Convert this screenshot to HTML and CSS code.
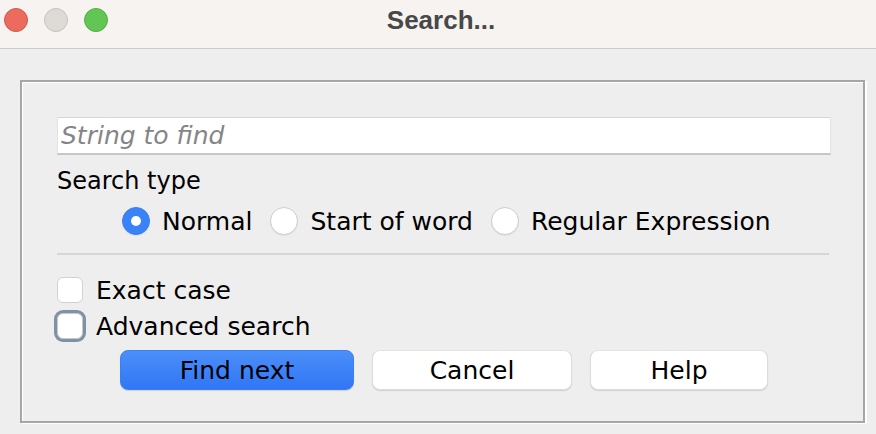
FILE: index.html
```html
<!DOCTYPE html>
<html>
<head>
<meta charset="utf-8">
<link rel="stylesheet" href="styles.css">
</head>
<body>
<div class="titlebar">
  <div class="lights">
    <span class="light red"></span>
    <span class="light gray"></span>
    <span class="light green"></span>
  </div>
  <div class="title">Search...</div>
</div>
<div class="content">
  <div class="panel">
    <input class="field" type="text" placeholder="String to find">
    <div class="label">Search type</div>
    <div class="radios">
      <div class="radio-item"><span class="radio on"></span><span>Normal</span></div>
      <div class="radio-item"><span class="radio"></span><span>Start of word</span></div>
      <div class="radio-item"><span class="radio"></span><span>Regular Expression</span></div>
    </div>
    <div class="sep"></div>
    <div class="check-row"><span class="check"></span><span>Exact case</span></div>
    <div class="check-row adv"><span class="check focus"></span><span>Advanced search</span></div>
    <div class="buttons">
      <button class="btn primary w1">Find next</button>
      <button class="btn w2">Cancel</button>
      <button class="btn w3">Help</button>
    </div>
  </div>
</div>
</body>
</html>
```

FILE: styles.css
```css
html, body {
  margin: 0;
  padding: 0;
}
body {
  width: 876px;
  height: 434px;
  background: #eeeeee;
  font-family: "DejaVu Sans", "Open Sans", sans-serif;
  color: #000;
  overflow: hidden;
}
.titlebar {
  height: 48px;
  background: #f7f3f0;
  border-bottom: 1px solid #cdcbc9;
  position: relative;
  display: flex;
  align-items: center;
  justify-content: center;
}
.lights {
  position: absolute;
  left: 4px;
  top: 8px;
  display: flex;
  gap: 16px;
}
.light {
  width: 22px;
  height: 22px;
  border-radius: 50%;
  display: block;
}
.red { background: #ec6a5e; border: 1px solid #d3574c; }
.gray { background: #dedad6; border: 1px solid #c6c2be; }
.green { background: #62c554; border: 1px solid #53ad45; }
.title {
  font-family: "Liberation Sans", Arial, sans-serif;
  font-weight: bold;
  font-size: 26px;
  color: #484848;
  margin-left: 6px;
  margin-top: -7px;
}
.content {
  padding: 31px 0 0 20px;
}
.panel {
  border: 2px solid #a6a6a6;
  box-shadow: inset 1px 1px 0 #ffffff, 2px 1px 0 #ffffff;
  padding: 35px 32px 0 35px;
  box-sizing: border-box;
  width: 845px;
  height: 343px;
}
.field {
  display: block;
  box-sizing: border-box;
  width: 774px;
  height: 38px;
  margin: 0;
  background: #fff;
  border: 1px solid #e2e2e2;
  border-top-color: #d6d6d6;
  border-bottom: 2px solid #c6c6c6;
  padding: 0 0 0 3px;
  font-family: "DejaVu Sans", sans-serif;
  font-size: 25px;
  font-style: italic;
  outline: none;
}
.field::placeholder {
  color: #858585;
  font-style: italic;
}
.label {
  font-size: 24px;
  line-height: 30px;
  margin-top: 11px;
}
.radios {
  display: flex;
  align-items: center;
  margin-top: 10px;
  margin-left: 65px;
  height: 30px;
  gap: 18px;
  font-size: 25px;
}
.radio-item {
  display: flex;
  align-items: center;
  gap: 12px;
  line-height: 30px;
}
.radio-item span:last-child {
  position: relative;
  top: 1px;
}
.radio {
  width: 26px;
  height: 26px;
  border-radius: 50%;
  background: #fff;
  border: 1px solid #cdcdcd;
  box-shadow: 0 1px 1px rgba(0,0,0,0.06);
  display: block;
  position: relative;
}
.radio.on {
  background: #3a82f7;
  border-color: #3a7ff0;
}
.radio.on::after {
  content: "";
  position: absolute;
  left: 8px;
  top: 8px;
  width: 10px;
  height: 10px;
  border-radius: 50%;
  background: #fff;
}
.sep {
  height: 2px;
  width: 772px;
  background: #d6d6d6;
  margin-top: 17px;
}
.check-row {
  display: flex;
  align-items: center;
  gap: 13px;
  font-size: 25px;
  line-height: 30px;
  height: 30px;
  margin-top: 20px;
}
.check-row span:last-child {
  position: relative;
  top: 1px;
}
.check-row.adv {
  margin-top: 6px;
}
.check {
  width: 24px;
  height: 24px;
  border-radius: 6px;
  background: #fff;
  border: 1px solid #d2d2d2;
  display: block;
}
.check.focus {
  border: 1px solid #c8c8c8;
  box-shadow: 0 0 0 3px #7f91a9;
}
.buttons {
  display: flex;
  gap: 18px;
  margin-left: 63px;
  margin-top: 9px;
}
.btn {
  height: 40px;
  border-radius: 8px;
  border: 1px solid #dcdcdc;
  border-top-color: #e3e3e3;
  background: #fff;
  box-shadow: 0 1px 1px rgba(0,0,0,0.12);
  font-family: "DejaVu Sans", sans-serif;
  font-size: 25px;
  color: #000;
  padding: 0;
  line-height: 37px;
}
.btn.primary {
  background: linear-gradient(#4b8ff9, #3176f5);
  border-color: #3a7ff3;
}
.w1 { width: 234px; }
.w2 { width: 200px; }
.w3 { width: 178px; }
```
